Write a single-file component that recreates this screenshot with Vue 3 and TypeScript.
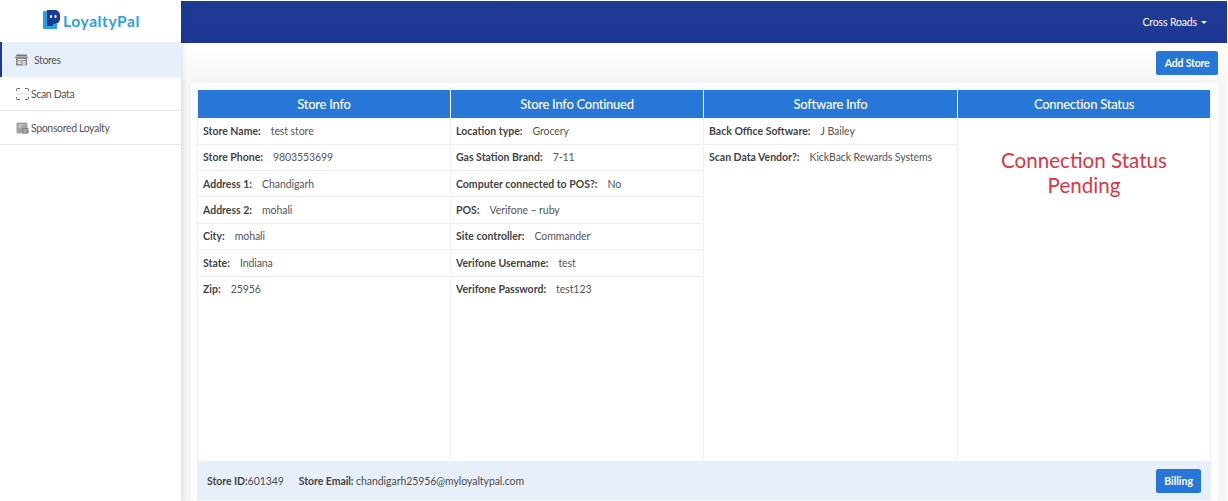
<script setup lang="ts">
interface Field { label: string; value: string }
const col1: Field[] = [
  { label: 'Store Name:', value: 'test store' },
  { label: 'Store Phone:', value: '9803553699' },
  { label: 'Address 1:', value: 'Chandigarh' },
  { label: 'Address 2:', value: 'mohali' },
  { label: 'City:', value: 'mohali' },
  { label: 'State:', value: 'Indiana' },
  { label: 'Zip:', value: '25956' },
]
const col2: Field[] = [
  { label: 'Location type:', value: 'Grocery' },
  { label: 'Gas Station Brand:', value: '7-11' },
  { label: 'Computer connected to POS?:', value: 'No' },
  { label: 'POS:', value: 'Verifone – ruby' },
  { label: 'Site controller:', value: 'Commander' },
  { label: 'Verifone Username:', value: 'test' },
  { label: 'Verifone Password:', value: 'test123' },
]
const col3: Field[] = [
  { label: 'Back Office Software:', value: 'J Bailey' },
  { label: 'Scan Data Vendor?:', value: 'KickBack Rewards Systems' },
]
const columns = [
  { title: 'Store Info', rows: col1 },
  { title: 'Store Info Continued', rows: col2 },
  { title: 'Software Info', rows: col3 },
]
</script>

<template>
  <div class="app">
    <aside class="sidebar">
      <div class="brand">
        <svg class="logo" width="17" height="20" viewBox="0 0 17 20">
          <path d="M1 1h5v13h8v5H1a1 1 0 0 1-1-1V2a1 1 0 0 1 1-1z" fill="#2b9fe6" />
          <path d="M4 0h8a5 5 0 0 1 5 5v4a5 5 0 0 1-5 5H10v2H4z" fill="#1f3a93" />
          <rect x="7" y="5" width="2" height="3" rx="1" fill="#fff" />
          <rect x="11.500" y="5" width="2" height="3" rx="1" fill="#fff" />
        </svg>
        <span class="brand-name">LoyaltyPal</span>
      </div>
      <nav class="nav">
        <a class="nav-item active">
          <svg class="ico" width="13" height="12" viewBox="0 0 13 12">
            <path d="M1 4h11v7.500H1z" fill="#8a8a8a" />
            <path d="M1.500.5h10L13 4H0z" fill="#777" />
            <path d="M.5 2.800h12" stroke="#d9d9d9" stroke-width=".8" />
            <path d="M2.500 5h8v1.200h-8z" fill="#e8e8e8" />
            <rect x="2.500" y="7.200" width="4" height="2.800" fill="#dcdcdc" />
            <rect x="7.500" y="7.200" width="3" height="4.300" fill="#dcdcdc" />
          </svg>
          <span>Stores</span>
        </a>
        <a class="nav-item">
          <svg class="ico" width="13" height="12" viewBox="0 0 13 12" fill="none" stroke="#555" stroke-width=".9">
            <path d="M.5 3V1.500a1 1 0 0 1 1-1H4M9 .5h2.500a1 1 0 0 1 1 1V3M.5 9v1.500a1 1 0 0 0 1 1H4M9 11.500h2.500a1 1 0 0 0 1-1V9" />
            <path d="M0 6h13" stroke="#c4c4c4" stroke-width=".6" />
          </svg>
          <span>Scan Data</span>
        </a>
        <a class="nav-item">
          <svg class="ico" width="13" height="12" viewBox="0 0 12 12">
            <rect width="11" height="11" y=".5" rx="1" fill="#a3a3a3" />
            <rect x="6" y="6" width="6" height="5.500" rx="1" fill="#7d7d7d" />
            <path d="M2 3h4M2 5h3M7 8h4M7 10h3" stroke="#eee" stroke-width=".8" />
          </svg>
          <span>Sponsored Loyalty</span>
        </a>
      </nav>
    </aside>

    <div class="content">
      <header class="topbar">
        <span class="account">Cross Roads<i class="caret"></i></span>
      </header>
      <main class="main">
        <div class="actions">
          <button class="btn add">Add Store</button>
        </div>
        <section class="card">
          <div class="grid">
            <div v-for="c in columns" :key="c.title" class="col">
              <h3 class="col-head">{{ c.title }}</h3>
              <div v-for="r in c.rows" :key="r.label" class="row">
                <b>{{ r.label }}</b><span>{{ r.value }}</span>
              </div>
            </div>
            <div class="col">
              <h3 class="col-head">Connection Status</h3>
              <p class="pending">Connection Status Pending</p>
            </div>
          </div>
          <footer class="foot">
            <div class="foot-info">
              <span><b>Store ID:</b>601349</span>
              <span><b>Store Email:</b> chandigarh25956@myloyaltypal.com</span>
            </div>
            <button class="btn">Billing</button>
          </footer>
        </section>
      </main>
    </div>
  </div>
</template>

<style>
html, body { margin: 0; background: #fff; }
</style>

<style scoped>
.app {
  display: flex;
  width: 1228px;
  height: 501px;
  overflow: hidden;
  font-family: Lato, "Open Sans", sans-serif;
  color: #4d4d4d;
  background: #fff;
}
.sidebar {
  width: 181px;
  flex: none;
  background: #fff;
  box-shadow: 1px 0 6px rgba(0, 0, 0, .12);
  position: relative;
  z-index: 1;
}
.brand {
  height: 42px;
  display: flex;
  align-items: center;
  justify-content: center;
  gap: 3px;
  padding-left: 2px;
  box-sizing: border-box;
}
.logo { display: block; margin-bottom: 2px; }
.brand-name {
  font-size: 15.500px;
  font-weight: 700;
  color: #2b9fe6;
  letter-spacing: .6px;
}
.nav-item {
  display: flex;
  box-sizing: border-box;
  align-items: center;
  height: 34px;
  border-bottom: 1px solid #e8e8e8;
  padding-left: 16px;
  padding-top: 1px;
  gap: 2px;
  font-size: 10.500px;
  letter-spacing: -.35px;
  color: #555;
}
.nav-item.active {
  height: 34.500px;
  background: #e7f0fa;
  border-bottom: 0;
  border-left: 2px solid #1f3a93;
  padding-left: 13px;
  gap: 6px;
}
.ico { flex: none; }
.content {
  flex: 1;
  min-width: 0;
  display: flex;
  flex-direction: column;
  padding-right: 1px;
}
.topbar {
  height: 42px;
  margin-top: 1px;
  flex: none;
  background: linear-gradient(#1f3a93, #1e3796);
  display: flex;
  align-items: center;
  justify-content: flex-end;
  padding-right: 20px;
  color: #fff;
  font-size: 10.500px;
  letter-spacing: -.15px;
}
.account { display: inline-flex; align-items: center; }
.caret {
  margin-left: 4px;
  border: 3.500px solid transparent;
  border-top-color: #fff;
  border-bottom: 0;
}
.main {
  flex: 1;
  min-height: 0;
  background: linear-gradient(#fff 0, #f6f6f6 40px);
  padding: 8px 9px 1px 10px;
  display: flex;
  flex-direction: column;
}
.actions {
  display: flex;
  justify-content: flex-end;
  margin-bottom: 8px;
}
.btn {
  height: 24px;
  padding: 0 8px;
  border: 0;
  border-radius: 2px;
  background: #2777d9;
  color: #fff;
  font: 700 10.500px Lato, sans-serif;
}
.btn.add { padding: 0 8.500px; letter-spacing: -.2px; }
.card {
  flex: 1;
  min-height: 0;
  background: #fff;
  border-radius: 3px 3px 0 0;
  padding: 7px 7px 0 6px;
  display: flex;
  flex-direction: column;
}
.grid {
  flex: 1;
  display: grid;
  grid-template-columns: 253px 253px 254px 1fr;
  min-height: 0;
}
.col {
  border-left: 1px solid #f0f2f5;
}
.col:last-child { border-right: 1px solid #f0f2f5; }
.col-head {
  margin: 0 0 .2px -1px;
  height: 28px;
  line-height: 28.500px;
  background: #2777d9;
  color: #fff;
  text-align: center;
  font-size: 13px;
  letter-spacing: -.28px;
  font-weight: 500;
  border-left: 1px solid #fff;
}
.col:first-child .col-head { border-left: 0; margin-left: 0; }
.row {
  height: 25.400px;
  border-bottom: 1px solid #eceef1;
  padding-left: 5px;
  display: flex;
  align-items: center;
  font-size: 10.500px;
  gap: 10px;
  white-space: nowrap;
}
.row:last-child { border-bottom: 0; }
.row b { color: #444; }
.row span { color: #555; letter-spacing: -.08px; }
.pending {
  margin: 30px auto 0;
  width: 200px;
  text-align: center;
  color: #dc3545;
  font-size: 20.600px;
  line-height: 25px;
}
.foot {
  height: 39px;
  flex: none;
  background: #e7f0fa;
  display: flex;
  align-items: center;
  justify-content: space-between;
  padding: 0 10px;
  font-size: 10.500px;
  letter-spacing: -.06px;
}
.foot-info { display: flex; gap: 15px; }
.foot b { color: #444; }
</style>
